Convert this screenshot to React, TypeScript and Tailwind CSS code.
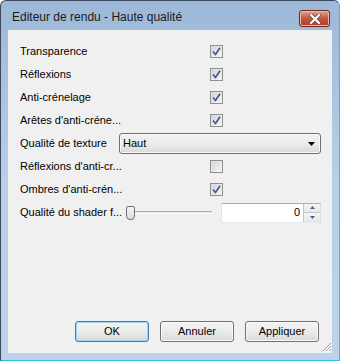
import { ReactNode } from "react";

const font = { fontFamily: '"Liberation Sans", Arial, sans-serif' };

function Check({ checked }: { checked: boolean }) {
  return (
    <span className="flex h-[13px] w-[13px] items-center justify-center border border-[#8f8f8f] bg-gradient-to-br from-[#dcdcdc] to-[#f6f6f6]">
      <span className="flex h-[9px] w-[9px] items-center justify-center bg-gradient-to-br from-[#d6d6d6] to-[#f2f2f2]">
        {checked && (
          <svg width="9" height="9" viewBox="0 0 9 9">
            <path d="M1 4.5 L3.5 7.5 L8 0.8" fill="none" stroke="#3d5599" strokeWidth="1.6" />
          </svg>
        )}
      </span>
    </span>
  );
}

function Row({ label, children }: { label: string; children?: ReactNode }) {
  return (
    <div className="flex h-[23px] items-center">
      <div className="w-[99px] shrink-0 whitespace-nowrap">{label}</div>
      <div className="flex flex-1 items-center">{children}</div>
    </div>
  );
}

function Btn({ label, main }: { label: string; main?: boolean }) {
  return (
    <button
      className={
        "flex h-[21px] w-[74px] items-center justify-center rounded-[3px] border bg-gradient-to-b from-[#f3f3f3] via-[#ebebeb] to-[#d9d9d9] text-black " +
        (main ? "border-[#3c7fb1] shadow-[inset_0_0_0_1px_#9fd6f5]" : "border-[#707070] shadow-[inset_0_0_0_1px_#fbfbfb]")
      }
    >
      {label}
    </button>
  );
}

export default function App() {
  return (
    <div className="h-[361px] w-[340px] bg-white text-[11px] text-black" style={font}>
      <div className="flex h-full w-full flex-col rounded-t-[6px] border border-[#3c4a5b] bg-gradient-to-b from-[#9db8d8] via-[#b7cfe9] to-[#bcd3eb] border-b-[#2ec0e0] border-r-[#2ec0e0]">
        {/* title bar */}
        <div className="flex h-[29px] shrink-0 items-center justify-between pl-[11px] pr-[9px]">
          <span className="mt-[2px] text-[12px] text-[#1a1a1a]">
            Editeur de rendu - Haute qualité
          </span>
          <span className="mt-[6px] flex h-[17px] w-[31px] items-center justify-center rounded-[3px] border border-[#6b2a22] bg-gradient-to-b from-[#e6a08f] via-[#c8553f] to-[#b73a22] shadow-[inset_0_0_0_1px_#eebbb0]">
            <svg width="12" height="10" viewBox="0 0 12 10">
              <path d="M2 1 L10 9 M10 1 L2 9" stroke="#5a5a5a" strokeWidth="3.6" strokeLinecap="square" />
              <path d="M2 1 L10 9 M10 1 L2 9" stroke="#ffffff" strokeWidth="2" strokeLinecap="square" />
            </svg>
          </span>
        </div>

        {/* client */}
        <div className="mx-[7px] flex flex-1 flex-col bg-[#f0f0f0] pl-[12px] pr-[11px] pt-[10px]">
          <Row label="Transparence">
            <span className="ml-[91px]"><Check checked /></span>
          </Row>
          <Row label="Réflexions">
            <span className="ml-[91px]"><Check checked /></span>
          </Row>
          <Row label="Anti-crénelage">
            <span className="ml-[91px]"><Check checked /></span>
          </Row>
          <Row label="Arêtes d'anti-créne...">
            <span className="ml-[91px]"><Check checked /></span>
          </Row>
          <Row label="Qualité de texture">
            <div className="flex h-[21px] flex-1 items-center justify-between rounded-[3px] border border-[#707070] bg-gradient-to-b from-[#f2f2f2] via-[#ebebeb] to-[#dadada] pl-[3px] pr-[5px] shadow-[inset_0_0_0_1px_#fafafa]">
              <span>Haut</span>
              <svg width="7" height="4" viewBox="0 0 7 4">
                <path d="M0 0 H7 L3.5 4 Z" fill="#000" />
              </svg>
            </div>
          </Row>
          <Row label="Réflexions d'anti-cr...">
            <span className="ml-[91px]"><Check checked={false} /></span>
          </Row>
          <Row label="Ombres d'anti-crén...">
            <span className="ml-[91px]"><Check checked /></span>
          </Row>
          <Row label="Qualité du shader f...">
            <div className="relative ml-[7px] flex h-[16px] w-[86px] items-center">
              <div className="h-[3px] w-full border-t border-[#b0b0b0] border-b border-b-[#ffffff] bg-[#e6e6e6]" />
              <div className="absolute left-0 top-[1px] h-[14px] w-[9px] rounded-b-[4px] rounded-t-[2px] border border-[#707070] bg-gradient-to-b from-[#f4f4f4] to-[#dcdcdc]" />
            </div>
            <div className="ml-[9px] flex h-[20px] flex-1 border border-t-[#abadb3] border-l-[#e2e3ea] border-b-[#e3e9ef] border-r-[#dbdfe6] bg-white">
              <div className="flex flex-1 items-center justify-end pr-[3px]">0</div>
              <div className="flex w-[17px] flex-col border-l border-[#c4c4c4]">
                <div className="flex flex-1 items-center justify-center border-b border-[#c4c4c4] bg-gradient-to-b from-[#f6f6f6] to-[#e6e6e6]">
                  <svg width="5" height="3" viewBox="0 0 5 3"><path d="M0 3 H5 L2.5 0 Z" fill="#4d6185" /></svg>
                </div>
                <div className="flex flex-1 items-center justify-center bg-gradient-to-b from-[#f6f6f6] to-[#e6e6e6]">
                  <svg width="5" height="3" viewBox="0 0 5 3"><path d="M0 0 H5 L2.5 3 Z" fill="#4d6185" /></svg>
                </div>
              </div>
            </div>
          </Row>

          <div className="flex-1" />

          <div className="relative flex justify-end gap-[11px] pb-[11px] pr-[2px]">
            <Btn label="OK" main />
            <Btn label="Annuler" />
            <Btn label="Appliquer" />
            <svg className="absolute -right-[11px] bottom-[1px]" width="10" height="10" viewBox="0 0 10 10">
              <path d="M9 1 L1 9 M9 4 L4 9 M9 7 L7 9" stroke="#a0a0a0" strokeWidth="1" />
              <path d="M10 2 L2 10 M10 5 L5 10 M10 8 L8 10" stroke="#ffffff" strokeWidth="1" />
            </svg>
          </div>
        </div>
        <div className="h-[7px] shrink-0" />
      </div>
    </div>
  );
}
